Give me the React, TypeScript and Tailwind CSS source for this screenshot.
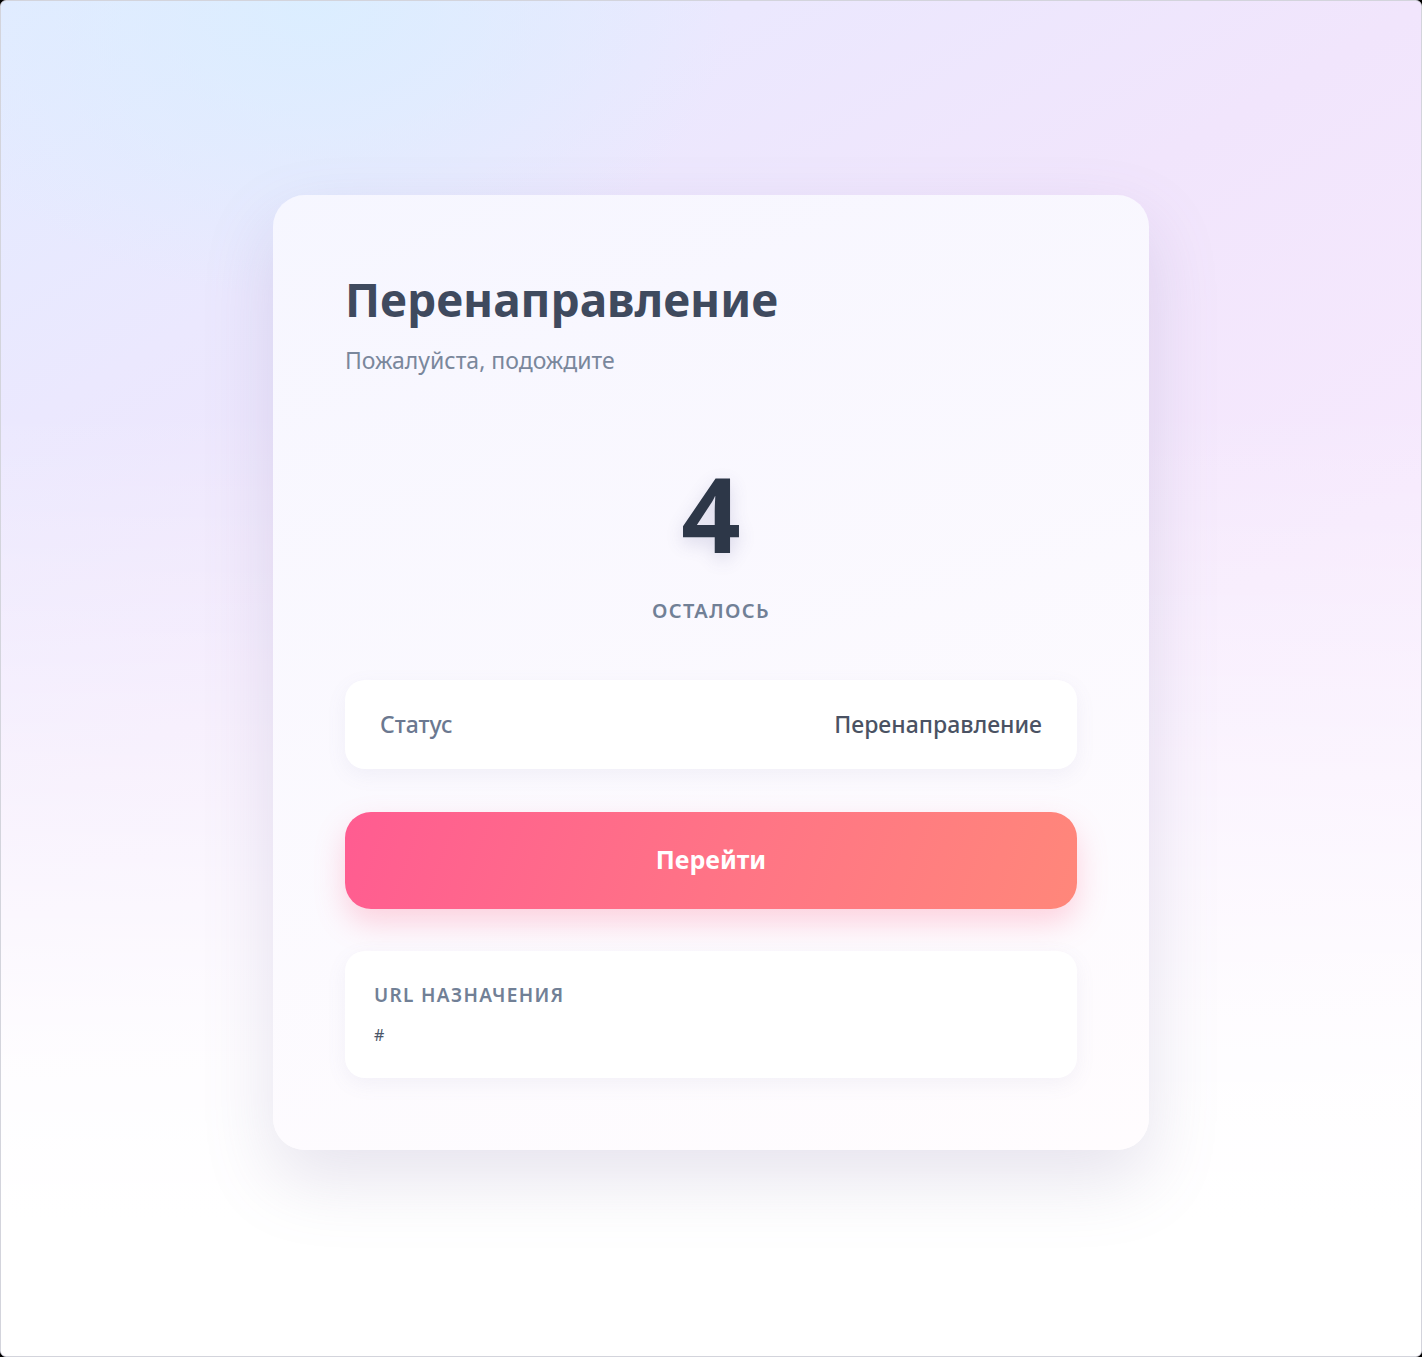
import React from 'react'

const font = { fontFamily: '"Noto Sans", "Open Sans", sans-serif' }

export default function App() {
  return (
    <div className="min-h-screen bg-black" style={font}>
      <div className="relative h-[1357px] w-full overflow-hidden rounded-[6px] border border-[#d3d4dc] bg-[linear-gradient(150deg,#e2ebff_0%,#ebe8fe_20%,#f1e5fc_38%,#f6e9fd_60%,#fbf0fe_100%)]">
        <div className="absolute inset-0 bg-[linear-gradient(to_bottom,rgba(255,255,255,0)_30%,rgba(255,255,255,0.45)_55%,rgba(255,255,255,0.9)_78%,#ffffff_90%)]" />
        <div className="absolute inset-0 bg-[radial-gradient(ellipse_420px_300px_at_22%_0%,rgba(218,238,255,0.9)_0%,rgba(218,238,255,0)_100%)]" />
        <div className="relative flex justify-center pt-[194px]">
          <div className="w-[876px] rounded-[32px] bg-[linear-gradient(160deg,rgba(247,247,255,0.94),rgba(255,252,254,0.96))] p-[72px] shadow-[0_30px_70px_rgba(120,110,160,0.18)]">
            <h1 className="text-[46px] font-bold leading-[1.42] text-[#3f4a5e]">Перенаправление</h1>
            <p className="mt-[12px] text-[23px] leading-[1.4] text-[#7a879c]">Пожалуйста, подождите</p>

            <div className="mt-[84px] flex flex-col items-center">
              <div className="text-[104px] font-bold leading-[1] text-[#2d3748] [text-shadow:0_6px_18px_rgba(80,80,140,0.18)]">4</div>
              <div className="mt-[31px] text-[20px] font-semibold uppercase tracking-[0.07em] text-[#718096]">Осталось</div>
            </div>

            <div className="mt-[54px] flex h-[89px] items-center justify-between rounded-[20px] bg-white px-[35px] shadow-[0_6px_20px_rgba(120,110,160,0.08)]">
              <span className="text-[23px] font-medium text-[#6b7890]">Статус</span>
              <span className="text-[23px] font-medium text-[#4a5263]">Перенаправление</span>
            </div>

            <button className="mt-[43px] flex h-[97px] w-full items-center justify-center rounded-[26px] bg-[linear-gradient(110deg,#ff5c91_0%,#ff7585_55%,#ff877a_100%)] text-[25px] font-bold text-white shadow-[0_14px_30px_rgba(255,105,140,0.28)]">
              Перейти
            </button>

            <div className="mt-[42px] rounded-[20px] bg-white px-[29px] pb-[31px] pt-[30px] shadow-[0_6px_20px_rgba(120,110,160,0.08)]">
              <div className="text-[19px] font-semibold uppercase tracking-[0.07em] text-[#718096]">URL назначения</div>
              <div className="mt-[14px] text-[16px] text-[#4a5568]">#</div>
            </div>
          </div>
        </div>
      </div>
    </div>
  )
}
